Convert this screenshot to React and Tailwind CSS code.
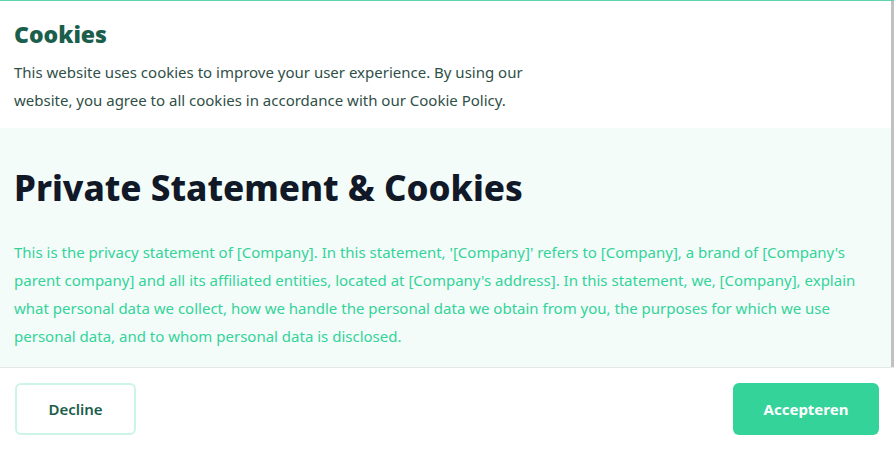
import React from "react";

const CookieModal = () => {
    return (
        <div className="w-full h-[450px] flex flex-col bg-white border-t border-[#5fd3a9] overflow-hidden" style={{ fontFamily: "'Noto Sans', sans-serif" }}>
            <div className="flex flex-1 min-h-0">
                <div className="flex flex-col flex-1">
                    <div className="bg-white px-[14px] pt-[19px] pb-[14px]">
                        <h2 className="text-[23px] leading-[28px] font-black text-[#1b5e4b]">Cookies</h2>
                        <p className="mt-[10px] max-w-[530px] text-[15px] leading-[28px] text-[#2f4f47]">
                            This website uses cookies to improve your user experience. By using our website, you agree to all cookies in accordance with our Cookie Policy.
                        </p>
                    </div>
                    <div className="flex-1 bg-[#f3fcf9] pl-[14px] pr-[10px] pt-[38px]">
                        <h1 className="text-[35px] leading-[44px] font-extrabold text-[#111827]">Private Statement &amp; Cookies</h1>
                        <p className="mt-[28px] text-[15px] leading-[28px] text-[#34d399]">
                            This is the privacy statement of [Company]. In this statement, '[Company]' refers to [Company], a brand of [Company's parent company] and all its affiliated entities, located at [Company's address]. In this statement, we, [Company], explain what personal data we collect, how we handle the personal data we obtain from you, the purposes for which we use personal data, and to whom personal data is disclosed.
                        </p>
                    </div>
                </div>
                <div className="w-[3px] bg-[#c1c1c1]" />
            </div>
            <div className="h-[83px] shrink-0 border-t border-gray-200 bg-white flex items-center justify-between pl-[15px] pr-[15px]">
                <button className="w-[121px] h-[52px] rounded-md border-2 border-[#cdf5e7] text-[15px] font-semibold text-[#1b5e4b]">
                    Decline
                </button>
                <button className="w-[146px] h-[52px] rounded-md bg-[#34d399] text-[15px] font-bold text-white">
                    Accepteren
                </button>
            </div>
        </div>
    );
};

export default function App() {
    return <CookieModal />;
}
